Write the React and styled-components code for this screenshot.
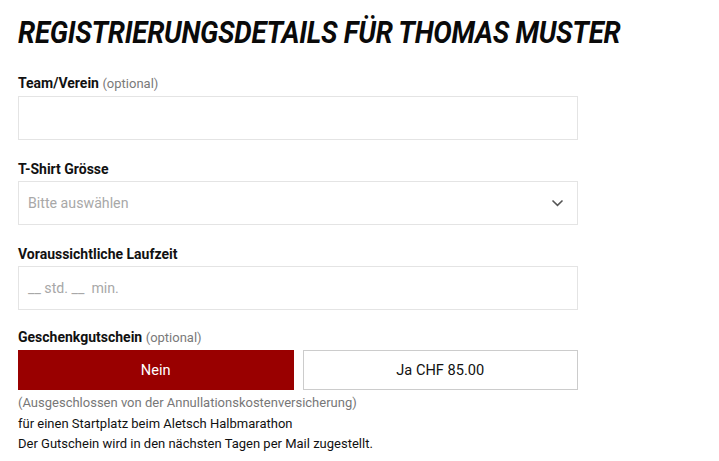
import React from 'react';
import styled, { createGlobalStyle } from 'styled-components';

const GlobalStyle = createGlobalStyle`
  body {
    margin: 0;
    background: #ffffff;
    font-family: Roboto, "Noto Sans", Arial, sans-serif;
    color: #111;
  }
`;

const Page = styled.div`
  padding: 12px 18px 0;
  width: 560px;
`;

// condensed italic heading, no condensed face installed so squeeze it
const Title = styled.h1`
  display: inline-block;
  margin: 0 0 21px;
  font-size: 32px;
  line-height: 40px;
  font-weight: 700;
  font-style: italic;
  text-transform: uppercase;
  white-space: nowrap;
  letter-spacing: -0.3px;
  color: #0a0a0a;
  transform: scaleX(0.863);
  transform-origin: left center;
`;

const Field = styled.div`
  display: flex;
  flex-direction: column;
  gap: 2px;
  margin-bottom: ${(p) => p.$after ?? 19}px;
`;

const Label = styled.label`
  font-size: 14px;
  line-height: 20px;
  font-weight: 700;
  color: #111;
`;

const Optional = styled.span`
  font-weight: 400;
  color: #7a7a7a;
  font-size: 13px;
`;

const Box = styled.div`
  height: 44px;
  box-sizing: border-box;
  border: 1px solid #e4e4e4;
  display: flex;
  align-items: center;
  justify-content: space-between;
  padding: 0 13px 0 9px;
  font-size: 14.2px;
  color: #a8a8a8;
`;

const Toggle = styled.div`
  display: grid;
  grid-template-columns: 1fr 1fr;
  gap: 9px;
`;

const Choice = styled.button`
  height: 40px;
  box-sizing: border-box;
  font-family: inherit;
  font-size: 14.6px;
  border: 1px solid ${(p) => (p.$active ? '#990000' : '#cccccc')};
  background: ${(p) => (p.$active ? '#990000' : '#ffffff')};
  color: ${(p) => (p.$active ? '#ffffff' : '#111111')};
  cursor: pointer;
`;

const Notes = styled.div`
  margin-top: 1px;
  font-size: 13px;
  line-height: 20.5px;
`;

const Note = styled.div`
  color: ${(p) => (p.$muted ? '#777' : '#111')};
`;

const Chevron = () => (
  <svg width="13" height="8" viewBox="0 0 13 8" fill="none">
    <path d="M1.5 1.5l5 4.8 5-4.8" stroke="#555" strokeWidth="1.6" />
  </svg>
);

export default function App() {
  return (
    <>
      <GlobalStyle />
      <Page>
        <Title>Registrierungsdetails für Thomas Muster</Title>
        <Field>
          <Label>
            Team/Verein <Optional>(optional)</Optional>
          </Label>
          <Box />
        </Field>
        <Field>
          <Label>T-Shirt Grösse</Label>
          <Box>
            <span>Bitte auswählen</span>
            <Chevron />
          </Box>
        </Field>
        <Field $after={17}>
          <Label>Voraussichtliche Laufzeit</Label>
          <Box>
            <span>__ std. __&nbsp; min.</span>
          </Box>
        </Field>
        <Field>
          <Label>
            Geschenkgutschein <Optional>(optional)</Optional>
          </Label>
          <Toggle>
            <Choice $active>Nein</Choice>
            <Choice>Ja CHF 85.00</Choice>
          </Toggle>
          <Notes>
            <Note $muted>(Ausgeschlossen von der Annullationskostenversicherung)</Note>
            <Note>für einen Startplatz beim Aletsch Halbmarathon</Note>
            <Note>Der Gutschein wird in den nächsten Tagen per Mail zugestellt.</Note>
          </Notes>
        </Field>
      </Page>
    </>
  );
}
